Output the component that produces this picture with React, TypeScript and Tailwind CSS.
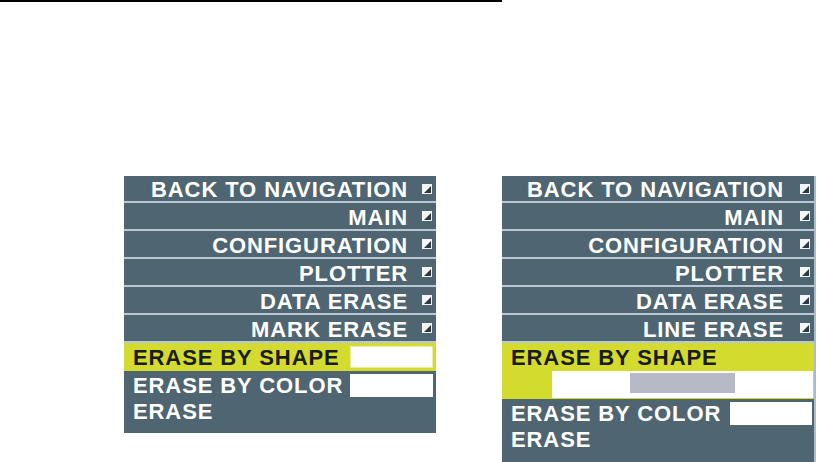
import React from "react";

const font = { fontFamily: '"Liberation Sans", Arial, sans-serif' };
const txt = "font-bold text-[22px] tracking-[0.9px] leading-none";

function NavIcon() {
  return (
    <svg width="10" height="10" viewBox="0 0 10 10" className="shrink-0">
      <rect x="0" y="0" width="10" height="10" fill="#f2f4f5" />
      <polygon points="9,2 9,9 2,9" fill="#2e3a40" />
    </svg>
  );
}

function NavRow({ label, first, gap }: { label: string; first?: boolean; gap: string }) {
  return (
    <div
      className={`flex items-center justify-end pr-[4px] border-b-2 border-[#b8c9d4] ${gap} ${
        first ? "h-[27px]" : "h-[28px]"
      }`}
    >
      <span className={`text-white mt-[3px] ${txt}`}>{label}</span>
      <NavIcon />
    </div>
  );
}

const navItems = ["BACK TO NAVIGATION", "MAIN", "CONFIGURATION", "PLOTTER", "DATA ERASE"];

export default function App() {
  return (
    <div className="w-[818px] h-[462px] bg-white overflow-hidden" style={font}>
      <div className="w-[502px] h-[2px] bg-black" />
      <div className="flex items-start pt-[174px] pl-[124px] gap-[66px]">
        {/* left menu */}
        <div className="w-[312px] h-[257px] bg-[#4f6672] flex flex-col">
          {navItems.map((n, i) => (
            <NavRow key={n} label={n} first={i === 0} gap="gap-[14px]" />
          ))}
          <NavRow label="MARK ERASE" gap="gap-[14px]" />
          <div className="h-[28px] bg-[#d3dc2e] flex items-center pl-[9px] pr-[3px]">
            <span className={`flex-1 text-[#1b1b1b] mt-[2px] ${txt}`}>ERASE BY SHAPE</span>
            <div className="w-[83px] h-[22px] bg-white border border-[#e8ee9a]" />
          </div>
          <div className="h-[28px] flex items-center pl-[9px] pr-[3px]">
            <span className={`flex-1 text-white mt-[2px] ${txt}`}>ERASE BY COLOR</span>
            <div className="w-[83px] h-[23px] bg-white" />
          </div>
          <div className="h-[26px] flex items-center pl-[9px]">
            <span className={`text-white ${txt}`}>ERASE</span>
          </div>
        </div>

        {/* right menu */}
        <div className="w-[314px] h-[288px] bg-[#4f6672] border-r-2 border-[#a9bccb] flex flex-col">
          {navItems.map((n, i) => (
            <NavRow key={n} label={n} first={i === 0} gap="gap-[16px]" />
          ))}
          <NavRow label="LINE ERASE" gap="gap-[16px]" />
          <div className="h-[56px] bg-[#d3dc2e] flex flex-col">
            <div className="h-[28px] flex items-center pl-[9px]">
              <span className={`text-[#1b1b1b] mt-[2px] ${txt}`}>ERASE BY SHAPE</span>
            </div>
            <div className="ml-[50px] mr-[1px] h-[27px] bg-white pt-[2px] pl-[78px]">
              <div className="w-[105px] h-[20px] bg-[#b7bac6]" />
            </div>
          </div>
          <div className="h-[28px] flex items-center pl-[9px] pr-[2px]">
            <span className={`flex-1 text-white mt-[2px] ${txt}`}>ERASE BY COLOR</span>
            <div className="w-[82px] h-[23px] bg-white" />
          </div>
          <div className="h-[26px] flex items-center pl-[9px]">
            <span className={`text-white ${txt}`}>ERASE</span>
          </div>
        </div>
      </div>
    </div>
  );
}
